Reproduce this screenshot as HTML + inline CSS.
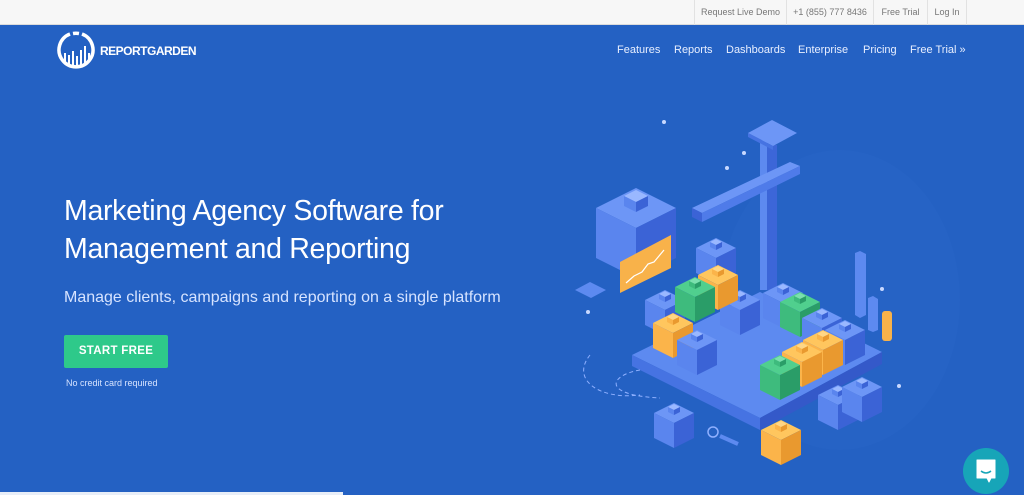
<!DOCTYPE html>
<html><head><meta charset="utf-8"><style>
*{margin:0;padding:0;box-sizing:border-box}
body{width:1024px;height:495px;overflow:hidden;background:#2461c3;font-family:"Liberation Sans",sans-serif;position:relative}
.top{position:absolute;left:0;top:0;width:1024px;height:25px;background:#f7f7f7;border-bottom:1px solid #dcdcdc}
.top a{position:absolute;top:0;height:25px;line-height:25px;font-size:9px;color:#777;border-left:1px solid #e2e2e2;text-align:center}
.nav a{position:absolute;top:44px;font-size:11px;color:#e8efff}
h1{position:absolute;left:64px;top:192px;font-weight:normal;color:#fff;font-size:28.5px;line-height:38px;letter-spacing:-0.3px}
.sub{position:absolute;left:64px;top:289px;font-size:16px;color:#d6e3ff}
.btn{position:absolute;left:64px;top:335px;width:104px;height:33px;background:#2ec98a;border-radius:2px;color:#fff;font-weight:bold;font-size:11.5px;line-height:33px;text-align:center;letter-spacing:.3px}
.nc{position:absolute;left:66px;top:378px;font-size:9px;color:#d6e3ff}
</style></head><body>
<div class="top">
<a style="left:694px;width:92px">Request Live Demo</a>
<a style="left:786px;width:87px">+1 (855) 777 8436</a>
<a style="left:873px;width:54px">Free Trial</a>
<a style="left:927px;width:40px;border-right:1px solid #e2e2e2">Log In</a>
</div>
<svg style="position:absolute;left:56px;top:31px" width="40" height="40" viewBox="0 0 40 40">
<path d="M14 3 A17 17 0 1 0 26 3" fill="none" stroke="#fff" stroke-width="3.5"/>
<path d="M17 2.5 A17 17 0 0 1 23 2.5" stroke="#fff" stroke-width="3.5" fill="none"/>
<g stroke="#fff" stroke-width="2"><line x1="9" y1="22" x2="9" y2="32"/><line x1="13" y1="24" x2="13" y2="35"/><line x1="17" y1="20" x2="17" y2="36"/><line x1="21" y1="25" x2="21" y2="36"/><line x1="25" y1="19" x2="25" y2="35"/><line x1="29" y1="15" x2="29" y2="32"/><line x1="33" y1="22" x2="33" y2="29"/></g>
</svg>
<div style="position:absolute;left:100px;top:44px;color:#fff;font-weight:bold;font-size:12px;letter-spacing:-0.5px">REPORTGARDEN</div>
<div class="nav">
<a style="left:617px">Features</a><a style="left:674px">Reports</a><a style="left:726px">Dashboards</a><a style="left:798px">Enterprise</a><a style="left:863px">Pricing</a><a style="left:910px">Free Trial »</a>
</div>
<h1>Marketing Agency Software for<br>Management and Reporting</h1>
<div class="sub">Manage clients, campaigns and reporting on a single platform</div>
<div class="btn">START FREE</div>
<div class="nc">No credit card required</div>
<div style="position:absolute;left:0;top:492px;width:343px;height:3px;background:#e8eef8"></div>

<svg style="position:absolute;left:0;top:0" width="1024" height="495">
<defs>
<g id="kb"><polygon points="0,0 6,3 0,6 -6,3" fill="#9ab8ff"/><polygon points="-6,3 0,6 0,11 -6,8" fill="#5a85ee"/><polygon points="0,6 6,3 6,8 0,11" fill="#3b63d6"/></g>
<g id="ko"><polygon points="0,0 6,3 0,6 -6,3" fill="#ffd685"/><polygon points="-6,3 0,6 0,11 -6,8" fill="#fbb44a"/><polygon points="0,6 6,3 6,8 0,11" fill="#e9992f"/></g>
<g id="kg"><polygon points="0,0 6,3 0,6 -6,3" fill="#7be0ae"/><polygon points="-6,3 0,6 0,11 -6,8" fill="#3ebb7d"/><polygon points="0,6 6,3 6,8 0,11" fill="#2a9d68"/></g>
<g id="cb"><polygon points="0,0 20,10 0,20 -20,10" fill="#6d96f6"/><polygon points="-20,10 0,20 0,45 -20,35" fill="#5a85ee"/><polygon points="0,20 20,10 20,35 0,45" fill="#3b63d6"/><use href="#kb" y="1"/></g>
<g id="co"><polygon points="0,0 20,10 0,20 -20,10" fill="#ffc65e"/><polygon points="-20,10 0,20 0,45 -20,35" fill="#fbb44a"/><polygon points="0,20 20,10 20,35 0,45" fill="#e9992f"/><use href="#ko" y="1"/></g>
<g id="cg"><polygon points="0,0 20,10 0,20 -20,10" fill="#50cf8e"/><polygon points="-20,10 0,20 0,45 -20,35" fill="#3ebb7d"/><polygon points="0,20 20,10 20,35 0,45" fill="#2a9d68"/><use href="#kg" y="1"/></g>
</defs>
<ellipse cx="840" cy="300" rx="120" ry="150" fill="#2a67c8" opacity=".35"/>
<polygon points="632,355 760,292 882,352 760,418" fill="#5d8af0"/>
<polygon points="632,355 760,418 760,430 632,366" fill="#4673e2"/>
<polygon points="760,418 882,352 882,364 760,430" fill="#3459c9"/>
<path d="M590 355 C570 380 600 400 640 395" fill="none" stroke="#8fb0ff" stroke-dasharray="4 3"/>
<path d="M640 370 C610 375 600 395 660 398" fill="none" stroke="#8fb0ff" stroke-dasharray="4 3"/>
<g transform="translate(636,188) scale(2)"><use href="#cb"/></g>
<polygon points="575,290 590,282 606,290 591,298" fill="#5d8af0"/>
<polygon points="620,262 671,235 671,268 620,293" fill="#f8b24a"/>
<polyline points="626,283 634,276 642,272 648,264 654,262 664,250" fill="none" stroke="#fff" stroke-width="1.2"/>
<rect x="760" y="140" width="7" height="150" fill="#5d8af0"/><rect x="767" y="145" width="10" height="145" fill="#3c66d8"/>
<polygon points="748,133 772,120 797,133 773,146" fill="#6d96f6"/><polygon points="748,133 773,146 773,150 748,137" fill="#4673e2"/>
<polygon points="692,208 790,162 800,166 702,213" fill="#6d96f6"/><polygon points="692,208 702,213 702,222 692,217" fill="#3b63d6"/><polygon points="702,213 800,166 800,174 702,222" fill="#4f7be9"/>
<use href="#cb" x="716" y="238"/>
<use href="#cb" x="665" y="290"/><use href="#cb" x="740" y="290"/>
<use href="#co" x="718" y="265"/>
<use href="#cg" x="695" y="277"/>
<use href="#co" x="673" y="313"/>
<use href="#cb" x="697" y="330"/>
<use href="#cb" x="783" y="283"/>
<use href="#cg" x="800" y="292"/>
<use href="#cb" x="822" y="308"/><use href="#cb" x="845" y="320"/>
<use href="#co" x="823" y="330"/>
<use href="#co" x="802" y="342"/>
<use href="#cg" x="780" y="355"/>
<use href="#cb" x="674" y="403"/>
<use href="#cb" x="838" y="385"/><use href="#cb" x="862" y="377"/>
<use href="#co" x="781" y="420"/>
<polygon points="855,253 860,251 866,254 866,315 860,318 855,315" fill="#5d8af0"/>
<polygon points="868,298 873,296 878,299 878,330 873,332 868,330" fill="#5d8af0"/>
<rect x="882" y="311" width="10" height="30" rx="3" fill="#f8b24a"/>
<circle cx="713" cy="432" r="5" fill="none" stroke="#8fb0ff" stroke-width="1.5"/><line x1="720" y1="436" x2="738" y2="444" stroke="#5d8af0" stroke-width="4"/>
<g fill="#c8d8ff"><circle cx="664" cy="122" r="2"/><circle cx="744" cy="153" r="2"/><circle cx="727" cy="168" r="2"/><circle cx="588" cy="312" r="2"/><circle cx="882" cy="289" r="2"/><circle cx="899" cy="386" r="2"/></g>
</svg>
<div style="position:absolute;left:963px;top:448px;width:46px;height:46px;border-radius:50%;background:#17a5b8"></div>
<svg style="position:absolute;left:975px;top:459px" width="22" height="24" viewBox="0 0 22 24"><path d="M2 1h18v18h-4l-2 4-2-4H2z" fill="#fff" stroke="#fff" stroke-linejoin="round"/><path d="M6 12q5 4 10 0" stroke="#17a5b8" stroke-width="1.5" fill="none"/></svg>
</body></html>
